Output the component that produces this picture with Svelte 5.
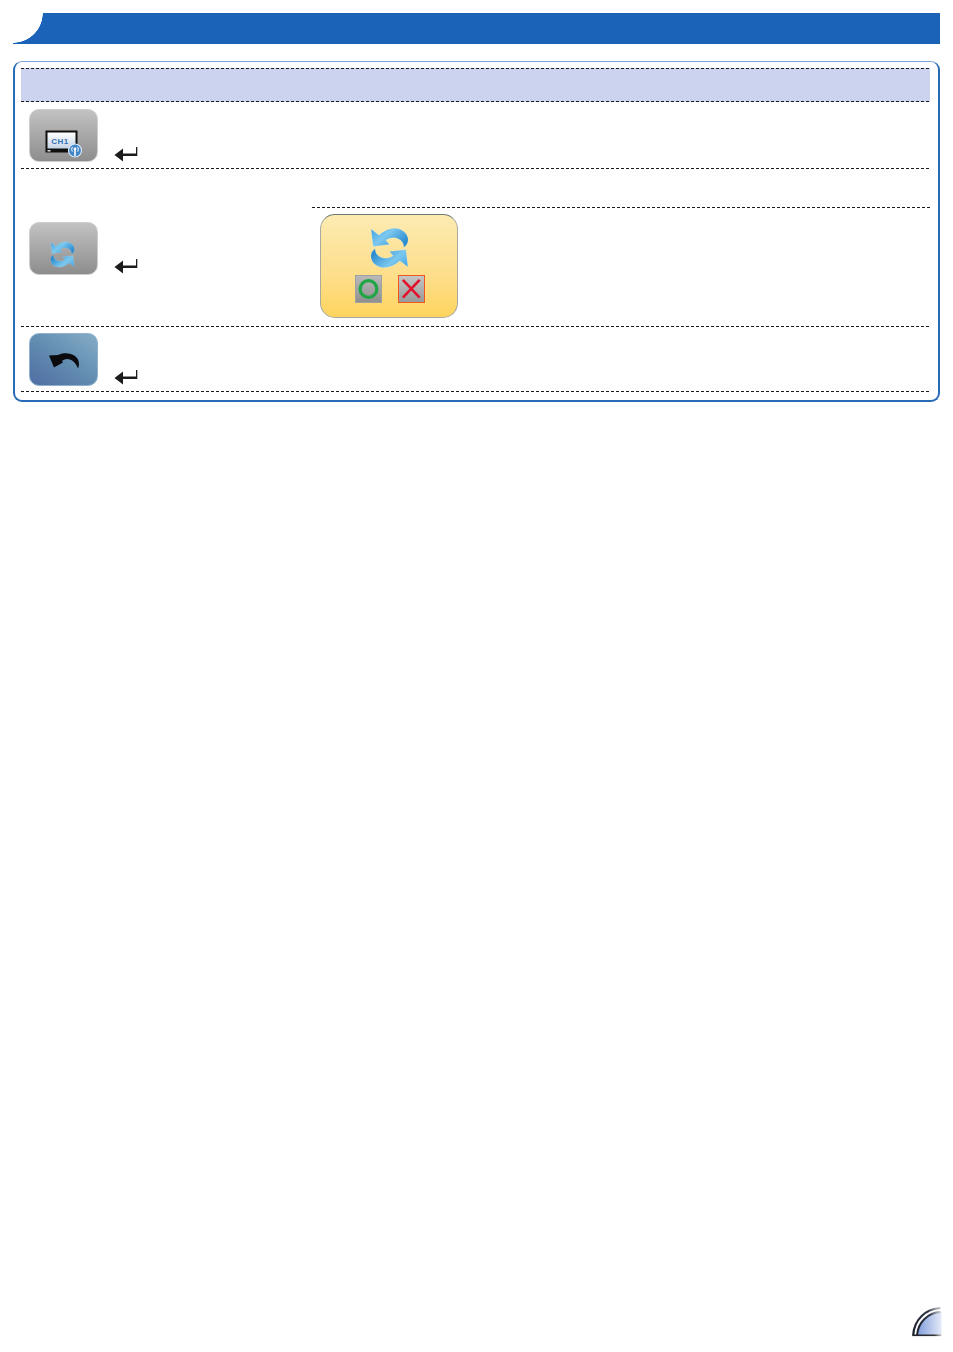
<script>
  const rows = [
    { kind: 'ch1', cls: 'r1' },
    { kind: 'sync', cls: 'r2' },
    { kind: 'back', cls: 'r3' }
  ];
</script>

{#snippet enter()}
  <svg class="enter" viewBox="0 0 24 15" width="24" height="15">
    <path d="M0.5 8 L9 1.5 V6.6 H22 V0 H23.3 V8.9 H9 V14.5 Z" fill="#1c1c1c" />
  </svg>
{/snippet}

{#snippet syncArrow(id)}
  <path d="M1 1 L9 7 C14 2 21 -0.5 27 0.5 C34 2 38 8 37 13 C36.6 15.5 35.5 17 33 19 C33 15 31 11.5 26 10 C22 9 18 10 15.5 12 L19 16 L3 18 Z" fill={'url(#' + id + ')'} stroke="#ffffff" stroke-opacity="0.35" stroke-width="0.5" />
{/snippet}

{#snippet sync(cls, id)}
  <svg class={cls} viewBox="0 0 38 39">
    <defs>
      <linearGradient id={id} x1="0" y1="0" x2="1" y2="0.6">
        <stop offset="0" stop-color="#3fa2e2" />
        <stop offset="0.45" stop-color="#7cc8ee" />
        <stop offset="1" stop-color="#2b8ccf" />
      </linearGradient>
    </defs>
    {@render syncArrow(id)}
    <g transform="rotate(180 19 19.5)">
      {@render syncArrow(id)}
    </g>
  </svg>
{/snippet}

{#snippet tile(kind)}
  {#if kind === 'ch1'}
    <div class="tile grey">
      <svg class="ch1" viewBox="0 0 44 30" width="44" height="30">
        <defs>
          <linearGradient id="scr" x1="0" y1="0" x2="0" y2="1">
            <stop offset="0" stop-color="#ffffff" />
            <stop offset="1" stop-color="#c5d3e6" />
          </linearGradient>
        </defs>
        <rect x="0.5" y="0.5" width="32" height="22" fill="#0f0f0f" />
        <rect x="2.5" y="2.5" width="28" height="16" fill="url(#scr)" />
        <rect x="2.5" y="20" width="3" height="1.5" fill="#ddd" />
        <text x="15" y="13.5" text-anchor="middle" class="chtext">CH1</text>
        <circle cx="30" cy="20.5" r="6.5" fill="#3f86c9" stroke="#dbe8f5" stroke-width="1.2" />
        <path d="M30 20 V26" stroke="#fff" stroke-width="1.6" />
        <circle cx="30" cy="19" r="1.4" fill="#fff" />
        <path d="M27.3 16.8 Q26 19.2 27.3 21.6 M32.7 16.8 Q34 19.2 32.7 21.6" fill="none" stroke="#fff" stroke-width="1" />
      </svg>
    </div>
  {:else if kind === 'sync'}
    <div class="tile grey">
      {@render sync('sync-small', 'gs')}
    </div>
  {:else}
    <div class="tile blue">
      <svg class="back" viewBox="0 0 32 16" width="32" height="16">
        <path d="M1 2.5 L10 2 C15 -0.5 22 -0.5 27 3 C31 6 32 11 30 15.5 C28 10 24 6 19 6 C17 6 15 7 14 8 L15 9.5 L6 14.5 Z" fill="#0b0b0f" />
      </svg>
    </div>
  {/if}
{/snippet}

<div class="page">
  <div class="title"></div>

  <div class="card">
    <div class="band"></div>

    {#each rows as row}
      <div class="row {row.cls}">
        <div class="cell">
          {@render tile(row.kind)}
          {@render enter()}
        </div>
        {#if row.kind === 'sync'}
          <div class="detail">
            <div class="sub"></div>
            <div class="dialog">
              {@render sync('sync-big', 'gb')}
              <div class="choices">
                <div class="choice">
                  <svg viewBox="0 0 26 28" width="26" height="28">
                    <circle cx="13" cy="14" r="8.7" fill="none" stroke="#1fa645" stroke-width="3.4" />
                  </svg>
                </div>
                <div class="choice cancel">
                  <svg viewBox="0 0 26 26" width="25" height="26">
                    <path d="M4 3.5 L21.5 22 M21.5 3.5 L4 22" stroke="#e3122c" stroke-width="2.7" />
                  </svg>
                </div>
              </div>
            </div>
          </div>
        {/if}
      </div>
    {/each}
  </div>

  <div class="footer">
    <svg viewBox="0 0 30 30" width="30" height="30">
      <defs>
        <linearGradient id="pg" x1="0" y1="0" x2="1" y2="0">
          <stop offset="0" stop-color="#7f9cdc" />
          <stop offset="1" stop-color="#e4eaf7" />
        </linearGradient>
        <linearGradient id="arc" x1="0" y1="1" x2="1" y2="0">
          <stop offset="0" stop-color="#1a1f2b" />
          <stop offset="0.7" stop-color="#2f3545" />
          <stop offset="1" stop-color="#c9c9cd" />
        </linearGradient>
        <linearGradient id="base" x1="0" y1="0" x2="1" y2="0">
          <stop offset="0" stop-color="#1a1f2b" />
          <stop offset="0.75" stop-color="#333" />
          <stop offset="1" stop-color="#ccc" />
        </linearGradient>
      </defs>
      <path d="M5 28.5 C6 15 16 6 29.5 4.5 V28.5 Z" fill="url(#pg)" />
      <path d="M1.2 28.5 C2 12 14 2 28.5 1" fill="none" stroke="url(#arc)" stroke-width="2.2" />
      <path d="M5 28.5 C6 15 16 6 28.5 4.8" fill="none" stroke="url(#arc)" stroke-width="2" />
      <rect x="0.5" y="27.5" width="29" height="1.6" fill="url(#base)" />
    </svg>
  </div>
</div>

<style>
  :global(body) {
    margin: 0;
    background: #fff;
    font-family: "Liberation Sans", sans-serif;
  }

  .page {
    --dash: repeating-linear-gradient(90deg, #1a1a1a 0 3px, transparent 3px 5px);
    box-sizing: border-box;
    width: 953px;
    height: 1352px;
    display: flex;
    flex-direction: column;
    padding: 13px 13px 15px 13px;
    background: #fff;
  }

  .title {
    width: 927px;
    height: 31px;
    flex: none;
    background: radial-gradient(circle 30px at 0 0, #fff 29.5px, #1b63b8 30px);
  }

  .card {
    box-sizing: border-box;
    width: 927px;
    height: 341px;
    margin-top: 17px;
    flex: none;
    padding: 6px 8px 8px 6px;
    border: 2px solid #2a6bb8;
    border-top: 1px solid #7ea4d9;
    border-radius: 9px;
  }

  .band {
    height: 34px;
    background:
      var(--dash) 0 0 / 100% 1px no-repeat,
      var(--dash) 0 100% / 100% 1px no-repeat,
      #cbd3ee;
  }

  .row {
    display: flex;
    background: var(--dash) 0 100% / 100% 1px no-repeat;
  }

  .r1 { height: 67px; }
  .r2 { height: 158px; }
  .r3 { height: 65px; }

  .cell {
    box-sizing: border-box;
    width: 291px;
    flex: none;
    display: flex;
    align-items: flex-end;
    align-self: flex-start;
    gap: 16px;
    padding-left: 8px;
  }

  .r1 .cell { padding-top: 7px; }
  .r2 .cell { padding-top: 53px; }
  .r3 .cell { padding-top: 6px; }

  .r2 .enter,
  .r3 .enter {
    margin-bottom: 1px;
  }

  .tile {
    box-sizing: border-box;
    width: 69px;
    height: 53px;
    flex: none;
    border-radius: 10px;
    display: flex;
    align-items: center;
    justify-content: center;
  }

  .grey {
    background: linear-gradient(180deg, #c2c2c2, #8d8d8d);
    border: 1px solid #cdcdcd;
  }

  .blue {
    background: linear-gradient(35deg, #4d6da2 0%, #6690b3 55%, #84aec6 100%);
    border: 1px solid #8fb1cf;
  }

  .ch1 {
    margin: 18px 0 0 7px;
  }

  .chtext {
    font: bold 8px "Liberation Sans", sans-serif;
    fill: #2f70b8;
    letter-spacing: 0.5px;
  }

  .back {
    margin-top: 3px;
  }

  .enter {
    flex: none;
    display: block;
  }

  .sync-small {
    width: 25px;
    height: 27px;
    margin: 11px 2px 0 0;
  }

  .sync-big {
    width: 39px;
    height: 42px;
    margin-top: 12px;
  }

  .detail {
    flex: 1;
    display: flex;
    flex-direction: column;
  }

  .sub {
    height: 39px;
    flex: none;
    background: var(--dash) 0 100% / 100% 1px no-repeat;
  }

  .dialog {
    box-sizing: border-box;
    width: 138px;
    height: 104px;
    margin: 6px 0 0 8px;
    border: 1.5px solid #a8a8a0;
    border-top-color: #6f7a78;
    border-radius: 15px;
    background: linear-gradient(180deg, #fcebb2 0%, #fdde8a 60%, #ffd45f 100%);
    display: flex;
    flex-direction: column;
    align-items: center;
  }

  .choices {
    display: flex;
    gap: 16px;
    margin: 6px 0 0 1px;
  }

  .choice {
    box-sizing: border-box;
    width: 27px;
    height: 28px;
    display: flex;
    align-items: center;
    justify-content: center;
    background: linear-gradient(180deg, #b9b9b9, #8f8f8f);
    border: 1px solid #a0a0a0;
  }

  .cancel {
    border: 1.5px solid #f0561f;
    background: linear-gradient(180deg, #c4c4c4, #9a9a9a);
  }

  .footer {
    margin-top: auto;
    display: flex;
    justify-content: flex-end;
    margin-right: -2px;
  }
</style>
